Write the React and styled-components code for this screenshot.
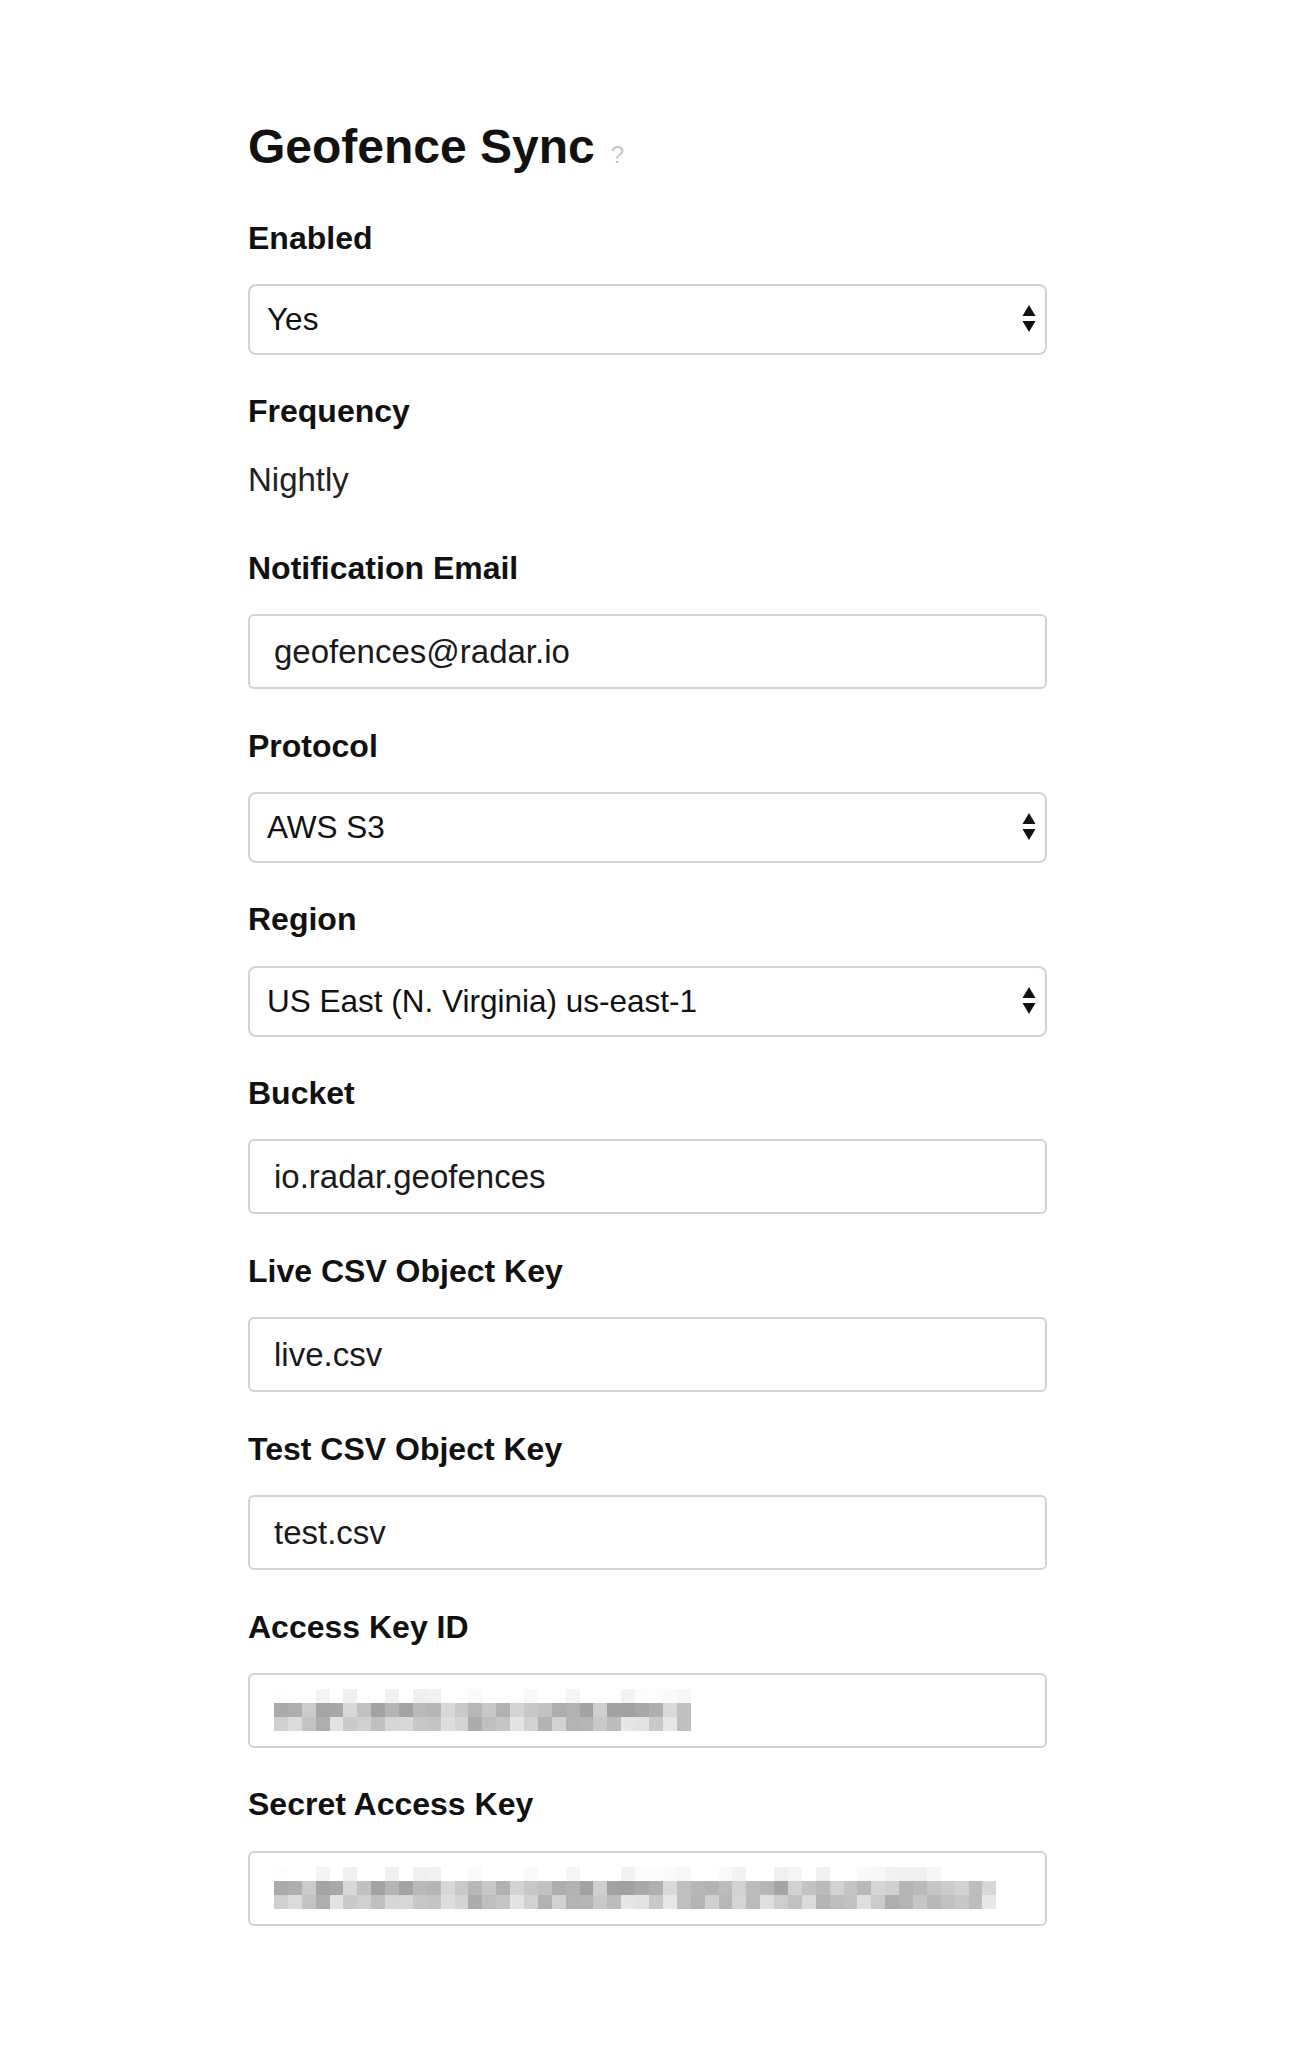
import React from 'react';
import styled, { createGlobalStyle } from 'styled-components';

const Global = createGlobalStyle`
  html, body { margin: 0; padding: 0; background: #ffffff; }
  body {
    font-family: "Liberation Sans", Arial, Helvetica, sans-serif;
    color: #111111;
    -webkit-font-smoothing: antialiased;
  }
  * { box-sizing: border-box; }
`;

const Page = styled.div`
  padding: 118px 0 120px 248px;
  min-height: 2050px;
`;

const Form = styled.div`
  width: 799px;
  display: flex;
  flex-direction: column;
`;

const Title = styled.h1`
  margin: 0 0 36px;
  display: flex;
  align-items: baseline;
  gap: 16px;
  font-size: 48px;
  line-height: 57.6px;
  font-weight: 700;
  color: #111111;
`;

const Help = styled.span`
  font-size: 24px;
  font-weight: 400;
  color: #c6c6c6;
`;

const Field = styled.div`
  display: flex;
  flex-direction: column;
  gap: ${(p) => (p.$static ? '29px' : '26.5px')};
  margin-bottom: ${(p) => (p.$static ? '50px' : '38.5px')};
`;

const Label = styled.label`
  font-size: 32px;
  line-height: 37.8px;
  font-weight: 700;
  color: #111111;
`;

const StaticValue = styled.div`
  font-size: 33px;
  line-height: 39.6px;
  color: #222222;
`;

const SelectWrap = styled.div`
  position: relative;
  height: 71px;
`;

const Select = styled.select`
  appearance: none;
  -webkit-appearance: none;
  width: 100%;
  height: 71px;
  padding: 0 50px 0 17px;
  border: 2px solid #d3d3d3;
  border-radius: 8px;
  background: #ffffff;
  font-family: "Liberation Sans", Arial, Helvetica, sans-serif;
  font-size: 31.5px;
  color: #111111;
  outline: none;
`;

const Arrows = styled.svg`
  position: absolute;
  right: 11px;
  top: 50%;
  transform: translateY(-50%);
  width: 14px;
  height: 30px;
  pointer-events: none;
`;

const Input = styled.input`
  width: 100%;
  height: 75px;
  padding: 0 24px;
  border: 2px solid #d3d3d3;
  border-radius: 6px;
  background: #ffffff;
  font-family: "Liberation Sans", Arial, Helvetica, sans-serif;
  font-size: 33px;
  color: #1a1a1a;
  outline: none;
`;

const MaskedBox = styled.div`
  height: 75px;
  padding: 0 24px;
  border: 2px solid #d3d3d3;
  border-radius: 6px;
  display: flex;
  align-items: center;
`;

const Mosaic = styled.div`
  display: grid;
  grid-template-columns: repeat(${(p) => p.$cols}, 13.9px);
  grid-auto-rows: 14px;
`;

const Cell = styled.span`
  display: block;
  background: ${(p) => p.$c};
`;

function rng(seed) {
  let s = seed;
  return () => {
    s = (s * 9301 + 49297) % 233280;
    return s / 233280;
  };
}

const MOSAIC = (() => {
  const r = rng(17);
  const cols = 52;
  const rows = [];
  const ranges = [
    [238, 255],
    [160, 218],
    [172, 232],
  ];
  for (let i = 0; i < 3; i++) {
    const row = [];
    for (let c = 0; c < cols; c++) {
      const [lo, hi] = ranges[i];
      let v = Math.round(lo + r() * (hi - lo));
      if (i === 0 && r() < 0.45) v = 255;
      row.push(`rgb(${v},${v},${v})`);
    }
    rows.push(row);
  }
  return rows;
})();

function Masked({ cols }) {
  const cells = [];
  for (let i = 0; i < 3; i++) {
    for (let c = 0; c < cols; c++) {
      cells.push(<Cell key={`${i}-${c}`} $c={MOSAIC[i][c]} />);
    }
  }
  return (
    <MaskedBox>
      <Mosaic $cols={cols}>{cells}</Mosaic>
    </MaskedBox>
  );
}

function SelectField({ label, value, options }) {
  return (
    <Field>
      <Label>{label}</Label>
      <SelectWrap>
        <Select defaultValue={value}>
          {options.map((o) => (
            <option key={o}>{o}</option>
          ))}
        </Select>
        <Arrows viewBox="0 0 14 30">
          <path d="M7 1 L13.5 12 L0.5 12 Z" fill="#111" />
          <path d="M0.5 17 L13.5 17 L7 28 Z" fill="#111" />
        </Arrows>
      </SelectWrap>
    </Field>
  );
}

function TextField({ label, value }) {
  return (
    <Field>
      <Label>{label}</Label>
      <Input defaultValue={value} />
    </Field>
  );
}

export default function App() {
  return (
    <>
      <Global />
      <Page>
        <Form>
          <Title>
            Geofence Sync <Help>?</Help>
          </Title>
          <SelectField label="Enabled" value="Yes" options={['Yes', 'No']} />
          <Field $static>
            <Label>Frequency</Label>
            <StaticValue>Nightly</StaticValue>
          </Field>
          <TextField label="Notification Email" value="geofences@radar.io" />
          <SelectField label="Protocol" value="AWS S3" options={['AWS S3', 'FTP', 'SFTP']} />
          <SelectField
            label="Region"
            value="US East (N. Virginia) us-east-1"
            options={['US East (N. Virginia) us-east-1', 'US West (Oregon) us-west-2']}
          />
          <TextField label="Bucket" value="io.radar.geofences" />
          <TextField label="Live CSV Object Key" value="live.csv" />
          <TextField label="Test CSV Object Key" value="test.csv" />
          <Field>
            <Label>Access Key ID</Label>
            <Masked cols={30} />
          </Field>
          <Field>
            <Label>Secret Access Key</Label>
            <Masked cols={52} />
          </Field>
        </Form>
      </Page>
    </>
  );
}
